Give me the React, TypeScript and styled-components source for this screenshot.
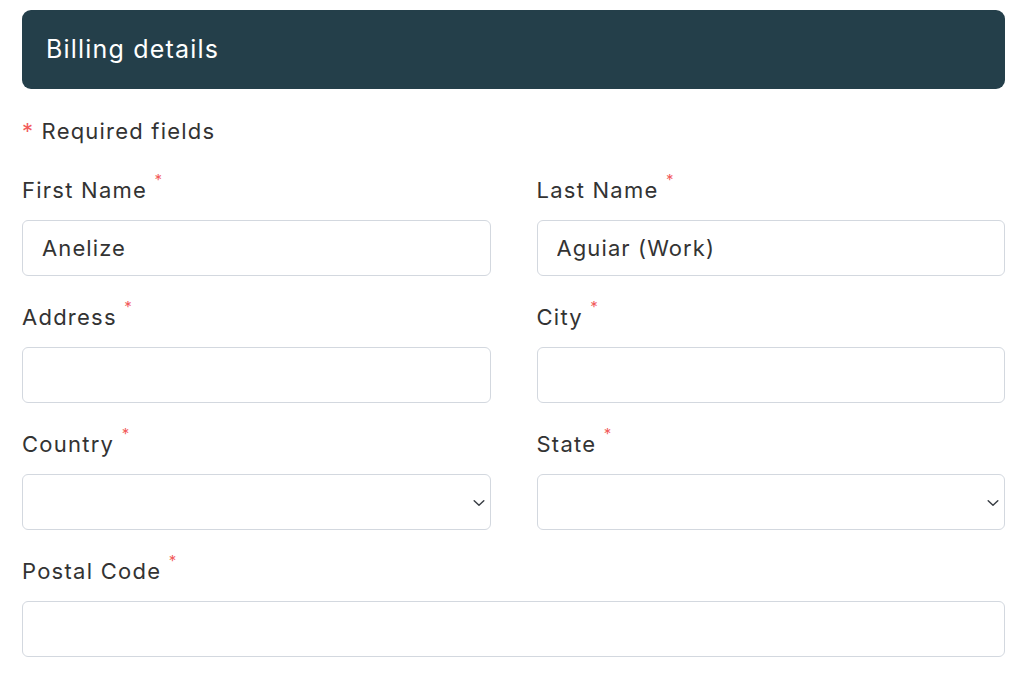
import React from 'react';
import styled, { createGlobalStyle } from 'styled-components';

const GlobalStyle = createGlobalStyle`
  body {
    margin: 0;
    background: #ffffff;
    font-family: Inter, 'Noto Sans', sans-serif;
  }
`;

type FieldData = {
  id: string;
  label: string;
  value?: string;
  select?: boolean;
  wide?: boolean;
};

const fields: FieldData[] = [
  { id: 'first', label: 'First Name', value: 'Anelize' },
  { id: 'last', label: 'Last Name', value: 'Aguiar (Work)' },
  { id: 'address', label: 'Address' },
  { id: 'city', label: 'City' },
  { id: 'country', label: 'Country', select: true },
  { id: 'state', label: 'State', select: true },
  { id: 'postal', label: 'Postal Code', wide: true }
];

const Chevron = () => (
  <svg width="12" height="8" viewBox="0 0 12 8" fill="none">
    <path d="M1.2 1.8 L6 6.2 L10.8 1.8" stroke="#3a3f45" strokeWidth="1.5" strokeLinecap="round" strokeLinejoin="round" />
  </svg>
);

const App = () => {
  return (
    <Page>
      <GlobalStyle />
      <Header>Billing details</Header>
      <RequiredNote>
        <Star>*</Star> Required fields
      </RequiredNote>
      <FieldGrid>
        {fields.map((field) => (
          <Field key={field.id} wide={field.wide}>
            <Label htmlFor={field.id}>
              {field.label} <Sup>*</Sup>
            </Label>
            {field.select ? (
              <SelectBox id={field.id}>
                <ChevronWrap>
                  <Chevron />
                </ChevronWrap>
              </SelectBox>
            ) : (
              <Input id={field.id} defaultValue={field.value} />
            )}
          </Field>
        ))}
      </FieldGrid>
    </Page>
  );
};

export default App;

const Page = styled.div`
  padding: 10px 19px 0 22px;
  color: #333333;
`;
const Header = styled.div`
  display: flex;
  align-items: center;
  height: 79px;
  padding-left: 24px;
  padding-bottom: 2px;
  box-sizing: border-box;
  background-color: #243f4a;
  border-radius: 9px;
  color: #ffffff;
  font-size: 25px;
  letter-spacing: 1.2px;
  font-weight: 400;
`;
const RequiredNote = styled.div`
  margin-top: 27px;
  line-height: 30px;
  font-size: 22px;
  letter-spacing: 1.2px;
  color: #333333;
`;
const Star = styled.span`
  color: #f25c5c;
`;
const FieldGrid = styled.div`
  display: grid;
  grid-template-columns: 1fr 1fr;
  column-gap: 46px;
  row-gap: 26px;
  margin-top: 29px;
`;
const Field = styled.div<{ wide?: boolean }>`
  display: flex;
  flex-direction: column;
  grid-column: ${(props) => (props.wide ? '1 / span 2' : 'auto')};
`;
const Label = styled.label`
  display: block;
  line-height: 30px;
  height: 30px;
  margin-bottom: 15px;
  font-size: 22px;
  letter-spacing: 1.25px;
  color: #333333;
`;
const Sup = styled.sup`
  color: #f25c5c;
  font-size: 15px;
  letter-spacing: 0;
  vertical-align: top;
  line-height: 14px;
  position: relative;
  top: -2px;
`;
const Input = styled.input`
  box-sizing: border-box;
  height: 56px;
  width: 100%;
  border: 1px solid #d3d8df;
  border-radius: 6px;
  padding: 0 19px;
  font-family: Inter, 'Noto Sans', sans-serif;
  font-size: 22px;
  letter-spacing: 1.1px;
  color: #333333;
  outline: none;
  background: #ffffff;
`;
const SelectBox = styled.div`
  box-sizing: border-box;
  display: flex;
  align-items: center;
  justify-content: flex-end;
  height: 56px;
  border: 1px solid #d3d8df;
  border-radius: 6px;
  padding-right: 5px;
  background: #ffffff;
`;
const ChevronWrap = styled.span`
  display: flex;
  margin-top: 1px;
`;
